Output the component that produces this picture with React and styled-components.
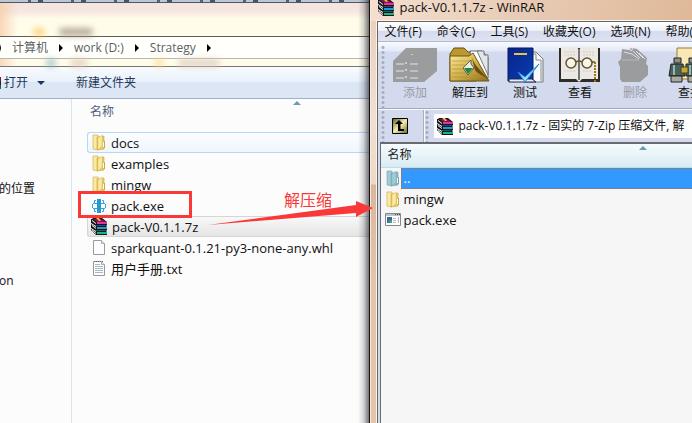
import React from 'react';
import styled, { createGlobalStyle, css } from 'styled-components';

const GlobalStyle = createGlobalStyle`
  * { box-sizing: border-box; }
  html, body { margin: 0; overflow: hidden; }
  body { background: #fcfcfc; }
  body, button, input {
    font-family: "Open Sans", "Noto Sans CJK SC", sans-serif;
    font-size: 12px;
    line-height: 20px;
    color: #111;
  }
  svg { flex: none; }
`;

const Desktop = styled.div`
  display: flex;
  min-height: 100vh;
  position: relative;
  white-space: nowrap;
`;

const Explorer = styled.section`
  flex: 371 1 0;
  min-width: 0;
  display: flex;
  flex-direction: column;
  overflow: hidden;
  position: relative;
  background: #fcfcfc;
`;

const EdgeShadow = styled.div`
  position: absolute;
  inset: 0 0 0 auto;
  width: 12px;
  background: linear-gradient(90deg, transparent, rgba(40, 40, 50, 0.18) 45%, rgba(30, 30, 40, 0.6) 90%, #111 91%);
`;

const BackTabs = styled.div`
  height: 3px;
  border-bottom: 1px solid #55565a;
  background: repeating-linear-gradient(90deg, #b9c7d8 0 28px, #526273 28px 31px, #b9c7d8 31px 38px, #445568 38px 43px);
`;

const Glass = styled.div`
  height: 34px;
  border-bottom: 1px solid #5e5d58;
  background: linear-gradient(90deg, rgba(246, 205, 170, 0.8), transparent 18px), linear-gradient(#f4e5e0 6px, #f8ebe2 10px, #fffdea 16px);
  display: flex;
  align-items: end;
  padding-left: 33px;
  gap: 14px;
`;

const Ghost = styled.span`
  width: ${(p) => p.$w}px;
  height: 8px;
  margin-left: ${(p) => (p.$far ? '16%' : 0)};
  border-radius: 4px;
  background: ${(p) => p.$c};
  filter: blur(3px);
  opacity: 0.75;
`;

const Breadcrumb = styled.nav`
  height: 22px;
  border-bottom: 1px solid #b8b7ae;
  background: #fffffb;
  display: flex;
  align-items: center;
  gap: 11px;
`;

const Crumb = styled.a`
  color: #5b5f63;
  text-decoration: none;
`;

const Triangle = styled.span`
  border: 4px solid transparent;
  border-left-color: #000;
  border-right-width: 0;
`;

const CutTriangle = styled(Triangle)`
  border-left-width: 1px;
`;

const GlassFoot = styled.div`
  height: 8px;
  border-bottom: 1px solid #777870;
  background: linear-gradient(90deg, #f8d9bd, #fffdea 18px);
  display: flex;
  padding-left: 46px;
  gap: 14px;
`;

const CommandBar = styled.div`
  height: 32px;
  border-bottom: 1px solid #a2afcc;
  background: linear-gradient(#f9fcff, #e8f0fa 48%, #dce6f4 50%, #dce6f4);
  display: flex;
  align-items: center;
  gap: 31px;
`;

const Command = styled.button`
  border: 0;
  padding: 0;
  background: none;
  color: #1e395b;
  display: flex;
  align-items: center;
  gap: 9px;
`;

const OpenLabel = styled.span`
  padding-left: 4px;
  background: linear-gradient(#7b1c3c 33%, #222 33% 66%, #0a6a55 66%) 0 50% / 1px 12px no-repeat;
`;

const DownArrow = styled.span`
  border: 4px solid transparent;
  border-top-color: #1e395b;
  border-bottom-width: 0;
`;

const ExplorerBody = styled.div`
  flex: 1;
  display: flex;
`;

const Sidebar = styled.aside`
  width: 72px;
  border-right: 1px solid #d6e5f0;
  padding-top: 80px;
  display: flex;
  flex-direction: column;
  gap: 72px;
  overflow: hidden;
`;

const Place = styled.a`
  color: #111;
  text-decoration: none;
  margin-left: -1px;
`;

const Listing = styled.div`
  flex: 1;
  min-width: 0;
`;

const FileTable = styled.table`
  width: 100%;
  border-collapse: collapse;
  table-layout: fixed;
`;

const ColumnHead = styled.th`
  height: 33px;
  padding: 3px 0 0 18px;
  text-align: left;
  vertical-align: top;
  font-weight: 400;
  color: #4c607a;
  position: relative;
`;

const SortMark = styled.span`
  position: absolute;
  top: 2px;
  left: ${(p) => p.$left};
  border: 4px solid transparent;
  border-bottom-color: #6c9ab5;
  border-top-width: 0;
`;

const FileCell = styled.td`
  padding: 0 0 0 15px;
`;

const FileRow = styled.div`
  height: 21px;
  display: flex;
  align-items: center;
  gap: 4px;
  padding-left: 3px;
  border: 1px solid transparent;
  border-right: 0;
  border-radius: 3px 0 0 3px;
  font-size: 13px;
  ${(p) => p.$state === 'hover' && css`border-color: #b8d6f5; background: linear-gradient(#fcfdff, #f0f6fd);`}
  ${(p) => p.$state === 'selected' && css`border-color: #d5d5d5; background: linear-gradient(#f8f8f8, #e5e5e5);`}
`;

const Archiver = styled.section`
  flex: 321 1 0;
  min-width: 0;
  display: flex;
  flex-direction: column;
  overflow: hidden;
  border-left: 1px solid #f7e8dc;
  background: linear-gradient(#e9cdb8, #f2dfd2 120px, #eed8c8 184px, #d9b79c 185px, #e6c4a9 280px);
`;

const TitleBar = styled.header`
  height: 21px;
  padding: 0 0 7px 7px;
  display: flex;
  align-items: center;
  gap: 4px;
  font-size: 13px;
  background: linear-gradient(100deg, #f5dfcf, #e8ccb7 45%, #dfb998);
`;

const Client = styled.div`
  flex: 1;
  margin-left: 6px;
  border: solid #666;
  border-width: 1px 0 0 1px;
  outline: 1px solid #fff2e8;
  display: flex;
  flex-direction: column;
  background: #d3daed;
`;

const MenuBar = styled.nav`
  height: 20px;
  padding-left: 6px;
  display: flex;
  align-items: center;
  gap: 15px;
  border-bottom: 1px solid #b5bac8;
  background: linear-gradient(#fff, #edf1fa 45%, #d6dcee 50%, #dde3f3);
`;

const MenuItem = styled.button`
  border: 0;
  padding: 0;
  background: none;
  flex: none;
`;

const ToolBar = styled.div`
  height: 67px;
  display: flex;
  padding: 3px 0 0 3px;
  border-bottom: 1px solid #a4aabd;
  background: linear-gradient(#f8faff, #e3e9f7 9px, #d3daed 10px);
`;

const Grip = styled.span`
  width: 4px;
  margin-right: ${(p) => (p.$roomy ? 2 : 0)}px;
  flex: none;
  background: radial-gradient(circle, #a8adba 1px, transparent 2px) 0 0 / 4px 5px;
`;

const Tool = styled.button`
  width: 55px;
  flex: none;
  border: 0;
  padding: 2px 0 0;
  background: none;
  display: flex;
  flex-direction: column;
  align-items: center;
  color: ${(p) => (p.disabled ? '#989ba5' : '#111')};
`;

const PathBar = styled.div`
  height: 33px;
  display: flex;
  padding-left: 3px;
  border-top: 1px solid #f6f8fc;
`;

const UpCell = styled.div`
  width: 40px;
  padding-left: 7px;
  display: flex;
  align-items: center;
  border-right: 1px solid #f8f9fc;
  box-shadow: inset -1px 0 #a9afc0;
`;

const IconButton = styled.button`
  border: 0;
  padding: 0;
  background: none;
  display: flex;
`;

const PathField = styled.label`
  flex: 1;
  min-width: 0;
  margin: 4px 0 4px 5px;
  padding-left: 3px;
  display: flex;
  align-items: center;
  gap: 4px;
  background: #fff;
`;

const PathInput = styled.input`
  flex: 1;
  min-width: 0;
  border: 0;
  padding: 0;
  background: none;
`;

const ArchiveList = styled.div`
  flex: 1;
  margin-left: 2px;
  border: solid #686b70;
  border-width: 2px 0 0 1px;
  background: #f6f6f6;
`;

const ArchiveHead = styled(ColumnHead)`
  height: 23px;
  padding: 1px 0 0 6px;
  color: #222;
  border-bottom: 1px solid #b5dfee;
  background: linear-gradient(#f5fbfe, #e6f4f8 50%, #d9ebf3);
`;

const ArchiveCell = styled.td`
  padding: 0;
`;

const ArchiveRow = styled.div`
  display: flex;
  align-items: center;
  padding-left: 4px;
  height: 21px;
  font-size: 13px;
`;

const ArchiveName = styled.span`
  flex: 1;
  height: 21px;
  padding-left: 1px;
  border: 1px ${(p) => (p.$active ? 'dotted #c66b18' : 'solid transparent')};
  border-right: 0;
  line-height: 18px;
  color: ${(p) => (p.$active ? '#fff' : '#111')};
  background: ${(p) => (p.$active ? '#3399ff' : 'transparent')};
`;

const Annotations = styled.div`
  position: absolute;
  inset: 0;
  pointer-events: none;
`;

const Highlight = styled.div`
  position: absolute;
  left: 78px;
  top: 191px;
  width: 114px;
  height: 27px;
  border: 3px solid #fb3838;
`;

const Note = styled.span`
  position: absolute;
  left: 284px;
  top: 190px;
  font-size: 16px;
  color: #fb3838;
`;

const Arrow = styled.svg`
  position: absolute;
  left: 208px;
  top: 200px;
`;

function Books() {
  return (
    <svg width="17" height="17" viewBox="0 0 17 17">
      <path d="M0 1h1l1-1h9l5 4v3l-1 1 1 1v3l-1 1 1 1v3H5L0 12z" fill="#15151a" />
      <path d="M2 1h8l5 3H6z" fill="#8f0f58" />
      <path d="M6 4h10v2H6z" fill="#e0389a" />
      <path d="M6 9h10v2H6z" fill="#1f9ad8" />
      <path d="M4 7h10l1 1H6z" fill="#0c4f9a" />
      <path d="M6 14h10v2H6z" fill="#19b286" />
      <path d="M4 12h10l1 1H6z" fill="#076a4c" />
      <path d="M1 2l4 3v1L1 3zM0 5l5 3v1L0 6zM1 7l4 3v1L1 8zM0 10l5 3v1l-5-3zM1 12l4 3v1l-4-3z" fill="#fff" />
      <path d="M5 0h3l2 3H8z" fill="#d5c635" />
    </svg>
  );
}

function Folder({ blue }) {
  const c = blue ? ['#a3cbd5', '#6ca5b5', '#86b8c4'] : ['#fbeaa2', '#cba93c', '#e6cb66'];
  return (
    <svg width="16" height="17" viewBox="0 0 16 17">
      <path d="M2 1h5v15l-5-1z" fill={c[0]} stroke={c[1]} strokeWidth=".6" />
      <path d="M6 3l7-1v13l-7 1z" fill={c[2]} stroke={c[1]} strokeWidth=".6" />
      <path d="M7 4l4-3v11l-4 4z" fill={c[0]} stroke={c[1]} strokeWidth=".3" />
      <path d="M13 7h1v7h-1z" fill={c[1]} />
      <path d="M12 8h1v5h-1z" fill="#fff" />
    </svg>
  );
}

function Package() {
  return (
    <svg width="16" height="16" viewBox="0 0 16 16" fill="none" stroke="#3aa3dc">
      <path d="M5 2.5H3.500V6M11 2.500h1.500V6M3.500 10v3.500H5M12.500 10v3.500H11M2 5.500h12M2 10.500h12M1.500 6v4M14.500 6v4" />
      <path d="M6 1h4v14H6z" fill="#2499d6" stroke="none" />
    </svg>
  );
}

function Sheet({ lined }) {
  return (
    <svg width="16" height="17" viewBox="0 0 16 17">
      <path d="M2.500 1.500h8l3 3v11h-11z" fill="#fdfdfd" stroke="#999" />
      <path d="M10.500 1.500v3h3" fill="#eee" stroke="#aaa" />
      {lined && <path d="M4 4.500h5M4 6.500h8M4 8.500h8M4 10.500h8M4 12.500h8" stroke="#a9b8c0" />}
      {lined && <path d="M3 1.500h9" stroke="#666" strokeDasharray="1 1" />}
    </svg>
  );
}

function Program() {
  return (
    <svg width="16" height="14" viewBox="0 0 16 14">
      <path d="M.5.500h15v12H.5z" fill="#fff" stroke="#83888f" />
      <path d="M1 1h14v2H1z" fill="#bcc4cc" />
      <path d="M10 1.500h1m1 0h1m1 0h1" stroke="#444" />
      <path d="M2 4h5v6H2z" fill="#34699a" />
      <path d="M4 7h3v3H3z" fill="#439c76" />
      <path d="M8 5.500h3M8 7.500h3M8 9.500h3M13.500 4v6" stroke="#b4bac0" />
    </svg>
  );
}

function UpFolder() {
  return (
    <svg width="16" height="16" viewBox="0 0 16 16">
      <defs><linearGradient id="up" x2="1" y2="1"><stop stopColor="#5d5520" /><stop offset=".5" stopColor="#f5edaf" /><stop offset="1" stopColor="#625c28" /></linearGradient></defs>
      <path d="M.5.500h15v15H.5z" fill="url(#up)" stroke="#000" />
      <path d="M7 2l4 4H8.500v5H12v2H6V6H3z" fill="#000" />
    </svg>
  );
}

const drawings = {
  add: (
    <>
      <path d="M1 14L14 1h31v23L32 35H1z" fill="#9b9c9e" />
      <path d="M4 17h8m6 0h8M4 24h8m6 0h8M4 31h8m6 0h8" stroke="#e2e5ed" />
      <path d="M14 15v2m0 5v2m0 5v2m6-24v1" stroke="#fff" />
    </>
  ),
  extract: (
    <>
      <path d="M3 7l4-6h10l4 4h8v29H3z" fill="#bd982f" stroke="#624f15" />
      <path d="M23 4h12l6 6v21H26z" fill="#fff" stroke="#666" />
      <path d="M30 4h7v4h4v20z" fill="#e3e7ea" stroke="#777" />
      <path d="M3 9h19l4-3 16 28H3z" fill="url(#gold)" stroke="#6c5617" />
      <path d="M5 14h20M5 18h17M5 22h12M5 26h13M5 30h28" stroke="#b39434" strokeWidth=".7" />
      <path d="M24 7c2 10 8 15 18 26-5-5-12-6-14-10z" fill="#6d4c10" />
      <path d="M16 21l8-8v4l3 4-6 7z" fill="#e9eee7" stroke="#596451" />
      <path d="M17 21h9l-5 6z" fill="#268636" />
    </>
  ),
  test: (
    <>
      <path d="M27 5h7l7 7v23H22z" fill="#f8fafc" stroke="#777" />
      <path d="M30 7h4v6h5v21" fill="none" stroke="#888" />
      <path d="M6 1h25v33H6z" fill="url(#blue)" stroke="#07195b" />
      <path d="M7 32h23l4 3H7z" fill="#eee" stroke="#16265d" />
      <path d="M12 7h13" stroke="#e1c547" strokeWidth="2" />
      <path d="M16 25l7 5 14-13-14 18z" fill="#9ddcff" stroke="#2387d8" />
    </>
  ),
  view: (
    <>
      <path d="M2 1h41v34H2z" fill="#302b24" />
      <path d="M4 0h16l2 3 2-3h17v32H25l-3 3-3-3H4z" fill="#ece9e4" />
      <path d="M22 2v31" stroke="#777" strokeWidth="2" />
      <path d="M7 5h11M7 8h11M7 24h11M26 5h11M26 8h11M26 24h9" stroke="#cfcbc4" strokeDasharray="2 1" />
      <g fill="#f8f5eb" stroke="#635328" strokeWidth="1.500">
        <circle cx="14" cy="16" r="5" /><circle cx="30" cy="16" r="5" />
        <path d="M19 15q3-2 6 0m10 0h3" fill="none" />
      </g>
      <path d="M38 15v20" stroke="#9a781d" strokeWidth="2" strokeDasharray="2 1" />
    </>
  ),
  remove: (
    <>
      <path d="M10 2l7 1 3-2 5 1 10 9-1 6 2 2v9l-8 7H10l-2-3V20l-2-5 3-3z" fill="#9b9c9e" />
      <path d="M12 5l8 2 7 5M21 4l7 7M24 4l7 7M27 6l6 6" fill="none" stroke="#dbe0ee" />
      <path d="M10 13h17" stroke="#bfc3cc" strokeWidth=".7" />
      <circle cx="19" cy="2" r="1.500" fill="#a5a8af" stroke="#eef0f6" strokeWidth=".8" />
    </>
  ),
  find: (
    <>
      <path d="M10 1h35v31H10z" fill="#f9e7b6" stroke="#9b7d39" />
      <path d="M7 11h7v5H7zm15 0h7v5h-7z" fill="#87908a" stroke="#222" />
      <path d="M4 17h12l2 12H2zm15 0h13l2 12H19z" fill="#47635e" stroke="#17211e" />
      <path d="M7 18v10m16-10v10" stroke="#9fb5ab" strokeWidth="2" />
      <path d="M14 20h7v6h-7z" fill="#c5a733" stroke="#4c421c" />
      <path d="M4 29h11v6H4zm17 0h12v6H21z" fill="#aaa89b" stroke="#222" />
    </>
  ),
};

function ToolArt({ name }) {
  return (
    <svg width="46" height="36" viewBox="0 0 46 36">
      <defs>
        <linearGradient id="gold" x2="1" y2="1"><stop stopColor="#fff0a0" /><stop offset=".5" stopColor="#d2b14d" /><stop offset="1" stopColor="#8e6d19" /></linearGradient>
        <linearGradient id="blue" x2="1" y2="1"><stop stopColor="#0a238c" /><stop offset="1" stopColor="#073eb0" /></linearGradient>
      </defs>
      {drawings[name]}
    </svg>
  );
}

const files = [
  ['docs', <Folder />, 'hover'],
  ['examples', <Folder />],
  ['mingw', <Folder />],
  ['pack.exe', <Package />],
  ['pack-V0.1.1.7z', <Books />, 'selected'],
  ['sparkquant-0.1.21-py3-none-any.whl', <Sheet />],
  ['用户手册.txt', <Sheet lined />],
];
const menus = ['文件(F)', '命令(C)', '工具(S)', '收藏夹(O)', '选项(N)', '帮助(H)'];
const tools = [['添加', 'add', true], ['解压到', 'extract'], ['测试', 'test'], ['查看', 'view'], ['删除', 'remove', true], ['查找', 'find']];
const entries = [['..', <Folder blue />, true], ['mingw', <Folder />], ['pack.exe', <Program />]];

export default function App() {
  return (
    <Desktop>
      <GlobalStyle />
      <Explorer>
        <BackTabs />
        <Glass><Ghost $w={12} $c="#ffc65a" /><Ghost $w={34} $c="#a19080" /></Glass>
        <Breadcrumb>
          <CutTriangle /><Crumb href="#computer">计算机</Crumb>
          <Triangle /><Crumb href="#work">work (D:)</Crumb>
          <Triangle /><Crumb href="#strategy">Strategy</Crumb><Triangle />
        </Breadcrumb>
        <GlassFoot>
          <Ghost $w={10} $c="#84b7bd" /><Ghost $w={18} $c="#dfc8b6" />
          <Ghost $w={10} $c="#ffd68a" $far /><Ghost $w={42} $c="#dcc9bf" />
        </GlassFoot>
        <CommandBar>
          <Command><OpenLabel>打开</OpenLabel><DownArrow /></Command>
          <Command>新建文件夹</Command>
        </CommandBar>
        <ExplorerBody>
          <Sidebar><Place href="#recent">的位置</Place><Place href="#on">on</Place></Sidebar>
          <Listing>
            <FileTable>
              <thead><tr><ColumnHead>名称<SortMark $left="74%" /></ColumnHead></tr></thead>
              <tbody>
                {files.map(([name, icon, state]) => (
                  <tr key={name}><FileCell><FileRow $state={state}>{icon}{name}</FileRow></FileCell></tr>
                ))}
              </tbody>
            </FileTable>
          </Listing>
        </ExplorerBody>
        <EdgeShadow />
      </Explorer>
      <Archiver>
        <TitleBar><Books />pack-V0.1.1.7z - WinRAR</TitleBar>
        <Client>
          <MenuBar>{menus.map((m) => <MenuItem key={m}>{m}</MenuItem>)}</MenuBar>
          <ToolBar>
            <Grip $roomy />
            {tools.map(([label, art, off]) => <Tool key={art} disabled={off}><ToolArt name={art} />{label}</Tool>)}
          </ToolBar>
          <PathBar>
            <Grip />
            <UpCell><IconButton aria-label="Up"><UpFolder /></IconButton></UpCell>
            <Grip />
            <PathField><Books /><PathInput aria-label="Path" defaultValue="pack-V0.1.1.7z - 固实的 7-Zip 压缩文件, 解" /></PathField>
          </PathBar>
          <ArchiveList>
            <FileTable>
              <thead><tr><ArchiveHead>名称<SortMark $left="83%" /></ArchiveHead></tr></thead>
              <tbody>
                {entries.map(([name, icon, active]) => (
                  <tr key={name}><ArchiveCell><ArchiveRow>{icon}<ArchiveName $active={active}>{name}</ArchiveName></ArchiveRow></ArchiveCell></tr>
                ))}
              </tbody>
            </FileTable>
          </ArchiveList>
        </Client>
      </Archiver>
      <Annotations>
        <Highlight />
        <Note>解压缩</Note>
        <Arrow width="168" height="30" viewBox="0 0 168 30"><path d="M0 25L148 5V1l17 7-17 9v-4z" fill="#fb3838" /></Arrow>
      </Annotations>
    </Desktop>
  );
}
